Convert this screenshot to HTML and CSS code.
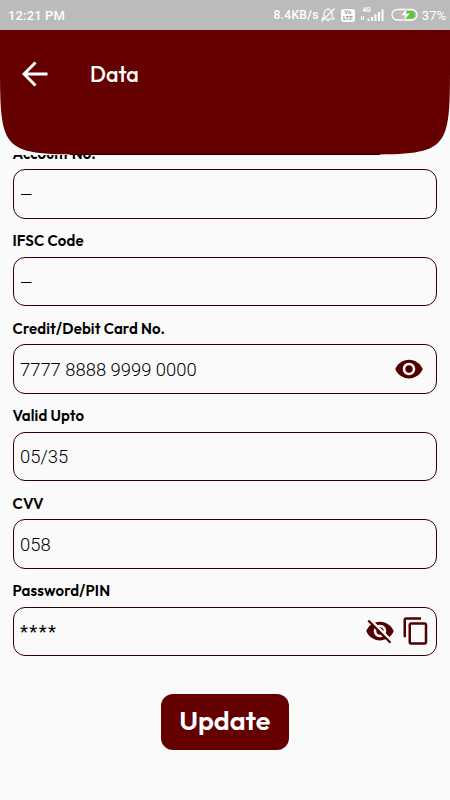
FILE: index.html
```html
<!DOCTYPE html>
<html lang="en">
<head>
    <meta charset="UTF-8">
    <meta name="viewport" content="width=device-width, initial-scale=1.0">
    <title>Data</title>
    <link rel="stylesheet" href="styles.css">
</head>
<body>

<div class="status-bar">
    <span class="clock">12:21 PM</span>
    <span class="speed">8.4KB/s</span>
    <svg class="bell" width="16" height="16" viewBox="0 0 16 16" fill="none" stroke="#fff" stroke-width="1.2">
        <path d="M2 12h12l-2-2.500V6.500a4 4 0 0 0-8 0v3zM6.500 13.500h3M8 2.500V1M1.500 14.500l13-13"/>
    </svg>
    <span class="volte"><span>Vo</span><span>LTE</span></span>
    <svg class="signal" width="24" height="16" viewBox="0 0 24 16" fill="#fff">
        <text x="1.500" y="5" font-size="6.500" font-weight="bold">4G</text>
        <path d="M0 9h1v4H0zM2 9h1v4H2zM6.500 11.500h2V14h-2zM10 10h2v4h-2zM13.500 7.500h2V14h-2zM17 5h2v9h-2zM20.500 2.500h2V14h-2z"/>
    </svg>
    <svg class="battery" width="28" height="14" viewBox="0 0 28 14">
        <rect x="1" y="1.500" width="25" height="10.500" rx="5.250" fill="none" stroke="#fff" stroke-width="1.300"/>
        <path d="M14 3h6a3.700 3.700 0 0 1 0 7.500h-7z" fill="#5cc92f"/>
        <path d="M16 0l-6 7.500h4L12 13l7-7.500h-4z" fill="#fff" stroke="#bbb" stroke-width=".5"/>
    </svg>
    <span class="percent">37%</span>
</div>

<header>
    <svg class="header-shape" width="450" height="125" viewBox="0 0 450 125">
        <path d="M0 0H450V30C450 124.500 450 124.500 355 124.500H95C0 124.500 0 124.500 0 30Z" fill="#650000"/>
        <path d="M70 124.500H380" stroke="#1c0000"/>
    </svg>
    <div class="toolbar">
        <svg width="26" height="26" viewBox="0 0 26 26" fill="none" stroke="#fff" stroke-width="3">
            <path d="M25.500 13H2.500M13.500 1.500L2 13l11.500 11.500"/>
        </svg>
        <h1>Data</h1>
    </div>
</header>

<main>
    <div class="group">
        <label>Account No.</label>
        <div class="field"><span class="dash">—</span></div>
    </div>
    <div class="group">
        <label>IFSC Code</label>
        <div class="field"><span class="dash">—</span></div>
    </div>
    <div class="group">
        <label>Credit/Debit Card No.</label>
        <div class="field">
            <span>7777 8888 9999 0000</span>
            <svg class="eye" width="30" height="30" viewBox="0 0 24 24">
                <path d="M12 4.500C7 4.500 2.730 7.610 1 12c1.730 4.390 6 7.500 11 7.500s9.270-3.110 11-7.500c-1.730-4.390-6-7.500-11-7.500zM12 17c-2.760 0-5-2.240-5-5s2.240-5 5-5 5 2.240 5 5-2.240 5-5 5zm0-8c-1.660 0-3 1.340-3 3s1.340 3 3 3 3-1.340 3-3-1.340-3-3-3z"/>
            </svg>
        </div>
    </div>
    <div class="group">
        <label>Valid Upto</label>
        <div class="field"><span>05/35</span></div>
    </div>
    <div class="group">
        <label>CVV</label>
        <div class="field"><span>058</span></div>
    </div>
    <div class="group">
        <label>Password/PIN</label>
        <div class="field">
            <span class="stars">****</span>
            <svg class="eye-off" width="30" height="30" viewBox="0 0 24 24">
                <path d="M12 7c2.760 0 5 2.240 5 5 0 .65-.13 1.260-.36 1.830l2.920 2.920c1.510-1.260 2.700-2.890 3.430-4.750-1.730-4.390-6-7.500-11-7.500-1.400 0-2.740.25-3.980.7l2.160 2.160C10.740 7.130 11.350 7 12 7zM2 4.270l2.280 2.280.46.46C3.080 8.300 1.780 10.020 1 12c1.730 4.390 6 7.500 11 7.500 1.550 0 3.030-.3 4.380-.84l.42.42L19.730 22 21 20.730 3.270 3 2 4.270zM7.530 9.800l1.550 1.550c-.05.21-.08.43-.08.65 0 1.660 1.340 3 3 3 .22 0 .44-.03.65-.08l1.550 1.550c-.67.33-1.410.53-2.200.53-2.760 0-5-2.240-5-5 0-.79.2-1.530.53-2.200zm4.310-.78l3.150 3.150.02-.16c0-1.660-1.340-3-3-3l-.17.01z"/>
            </svg>
            <svg class="copy" width="30" height="30" viewBox="0 0 24 24">
                <path d="M16 1H4c-1.100 0-2 .9-2 2v14h2V3h12V1zm3 4H8c-1.100 0-2 .9-2 2v14c0 1.100.9 2 2 2h11c1.100 0 2-.9 2-2V7c0-1.100-.9-2-2-2zm0 16H8V7h11v14z"/>
            </svg>
        </div>
    </div>
    <button class="update">Update</button>
</main>

</body>
</html>
```
FILE: styles.css
```css
* {
    box-sizing: border-box;
}
body {
    margin: 0;
    height: 800px;
    overflow: hidden;
    background-color: #fafafa;
    color: #000;
    font-family: Roboto, sans-serif;
}
.status-bar {
    display: flex;
    align-items: center;
    height: 30px;
    padding: 0 4px 0 8px;
    background-color: #bbb;
    color: #fff;
    font-size: 13px;
    font-weight: 500;
    white-space: nowrap;
}
.clock {
    margin-right: auto;
    letter-spacing: 0.15px;
}
.speed {
    font-size: 12px;
    letter-spacing: 0.35px;
}
.bell {
    margin-left: 1px;
}
.volte {
    display: flex;
    flex-direction: column;
    align-items: center;
    justify-content: center;
    width: 14px;
    height: 13px;
    margin-left: 5px;
    border-radius: 3px;
    background-color: #fff;
    color: #999;
    font-size: 6px;
    font-weight: 700;
    line-height: 6px;
}
.signal {
    margin-left: 6px;
}
.battery {
    margin: 0 3px 0 6px;
}
.percent {
    font-size: 13px;
    font-weight: 400;
}
header {
    position: relative;
    height: 125px;
}
.header-shape {
    position: absolute;
    top: 0;
    left: 0;
}
.toolbar {
    position: relative;
    display: flex;
    align-items: center;
    height: 88px;
    padding-left: 22px;
}
h1 {
    margin: 0 0 0 42px;
    color: #fff;
    font-family: Outfit, Lato, sans-serif;
    font-size: 21.5px;
    font-weight: 500;
}
/* the scrolled list is cut off at the bottom of the header */
main {
    display: flex;
    flex-direction: column;
    height: 645px;
    overflow: hidden;
    padding: 0 13px 0 12.5px;
}
.group {
    display: flex;
    flex-direction: column;
    margin-bottom: 12.5px;
}
.group:first-child {
    margin-top: -11.5px;
}
label {
    height: 20px;
    margin-bottom: 5.5px;
    font-family: Outfit, Lato, sans-serif;
    font-size: 15px;
    font-weight: 600;
    letter-spacing: 0.12px;
    line-height: 20px;
}
.field {
    display: flex;
    align-items: center;
    height: 49.5px;
    padding: 1px 5.5px 0 6.5px;
    border: 1px solid #350000;
    border-radius: 12px;
    font-size: 18.4px;
    font-weight: 300;
}
.field svg {
    margin-top: -1px;
    fill: #500000;
}
.dash {
    padding-top: 3px;
    font-size: 16px;
}
.stars {
    letter-spacing: 1.4px;
    font-weight: 400;
}
.field .eye {
    margin-right: 7px;
    margin-left: auto;
}
.field .eye-off {
    margin-right: 6px;
    margin-left: auto;
}
.update {
    flex: none;
    align-self: center;
    width: 128px;
    height: 56px;
    margin-top: 25.5px;
    padding: 0 0 5px;
    border: 0;
    border-radius: 12px;
    background-color: #650000;
    color: #fff;
    font-family: Outfit, Lato, sans-serif;
    font-size: 27px;
    font-weight: 600;
}
```
